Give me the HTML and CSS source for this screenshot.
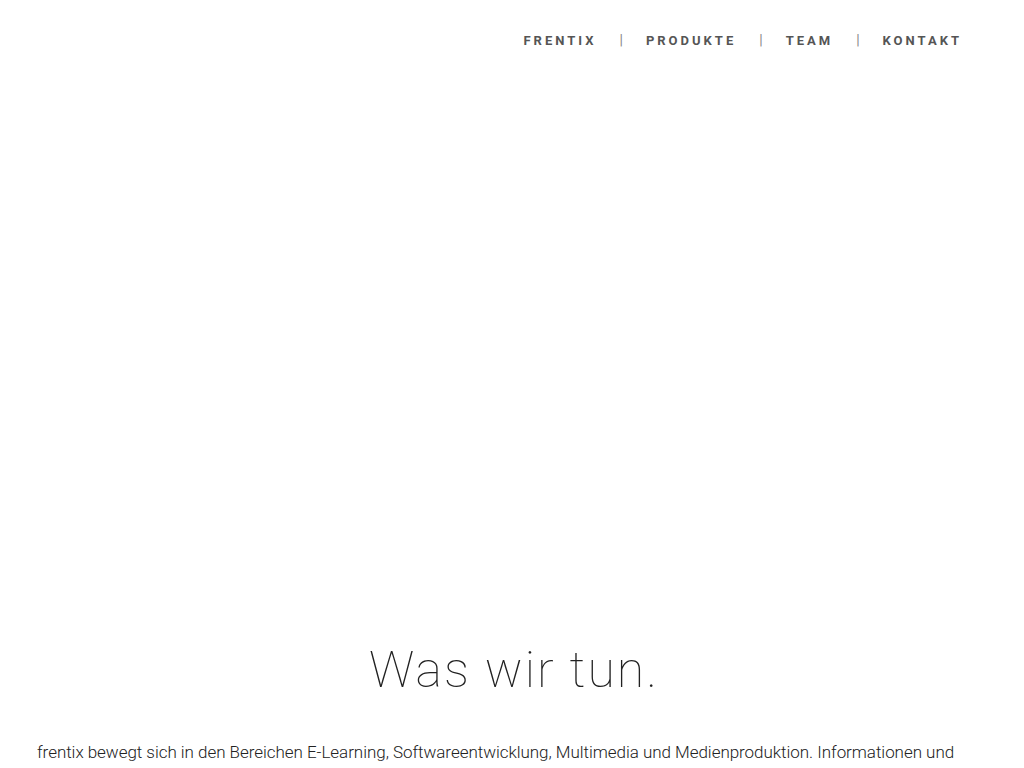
FILE: index.html
```html
<!DOCTYPE html>
<html>
<head>
    <title>frentix</title>
    <link rel="stylesheet" href="styles.css">
</head>
<body>
    <div class="header">
        <ul class="nav">
            <li><a href="#">Frentix</a></li>
            <li class="sep">|</li>
            <li><a href="#">Produkte</a></li>
            <li class="sep">|</li>
            <li><a href="#">Team</a></li>
            <li class="sep">|</li>
            <li><a href="#">Kontakt</a></li>
        </ul>
    </div>

    <div class="hero"></div>

    <div class="section">
        <h1 class="title">Was wir tun.</h1>
        <p class="text">frentix bewegt sich in den Bereichen E-Learning, Softwareentwicklung, Multimedia und Medienproduktion. Informationen und Wissen lassen sich heute einfacher, schneller und nachhaltiger vermitteln als je zuvor. Wir begleiten Sie dabei von der Idee bis zum fertigen Produkt.</p>
    </div>
</body>
</html>
```

FILE: styles.css
```css
body {
    margin: 0;
    background-color: #ffffff;
    color: #333333;
    font-family: Roboto, "Noto Sans", sans-serif;
}
.header {
    height: 79px;
    display: flex;
    justify-content: flex-end;
    align-items: center;
    padding-right: 62px;
}
.nav {
    list-style: none;
    margin: 0;
    padding: 0;
    display: flex;
    align-items: center;
    gap: 23px;
}
.nav a {
    color: #555555;
    text-decoration: none;
    text-transform: uppercase;
    font-size: 13px;
    font-weight: 700;
    letter-spacing: 3px;
}
.sep {
    color: #888888;
    font-size: 14px;
}
.hero {
    height: 553px;
}
.section {
    width: 950px;
    margin: 0 auto;
}
.title {
    margin: 0;
    padding-left: 4px;
    text-align: center;
    font-size: 50px;
    font-weight: 100;
    letter-spacing: 2px;
    color: #222222;
    line-height: 76px;
}
.text {
    margin: 31px 0 0;
    font-size: 17px;
    line-height: 26px;
    font-weight: 300;
    letter-spacing: -0.04px;
    color: #222222;
}
```
